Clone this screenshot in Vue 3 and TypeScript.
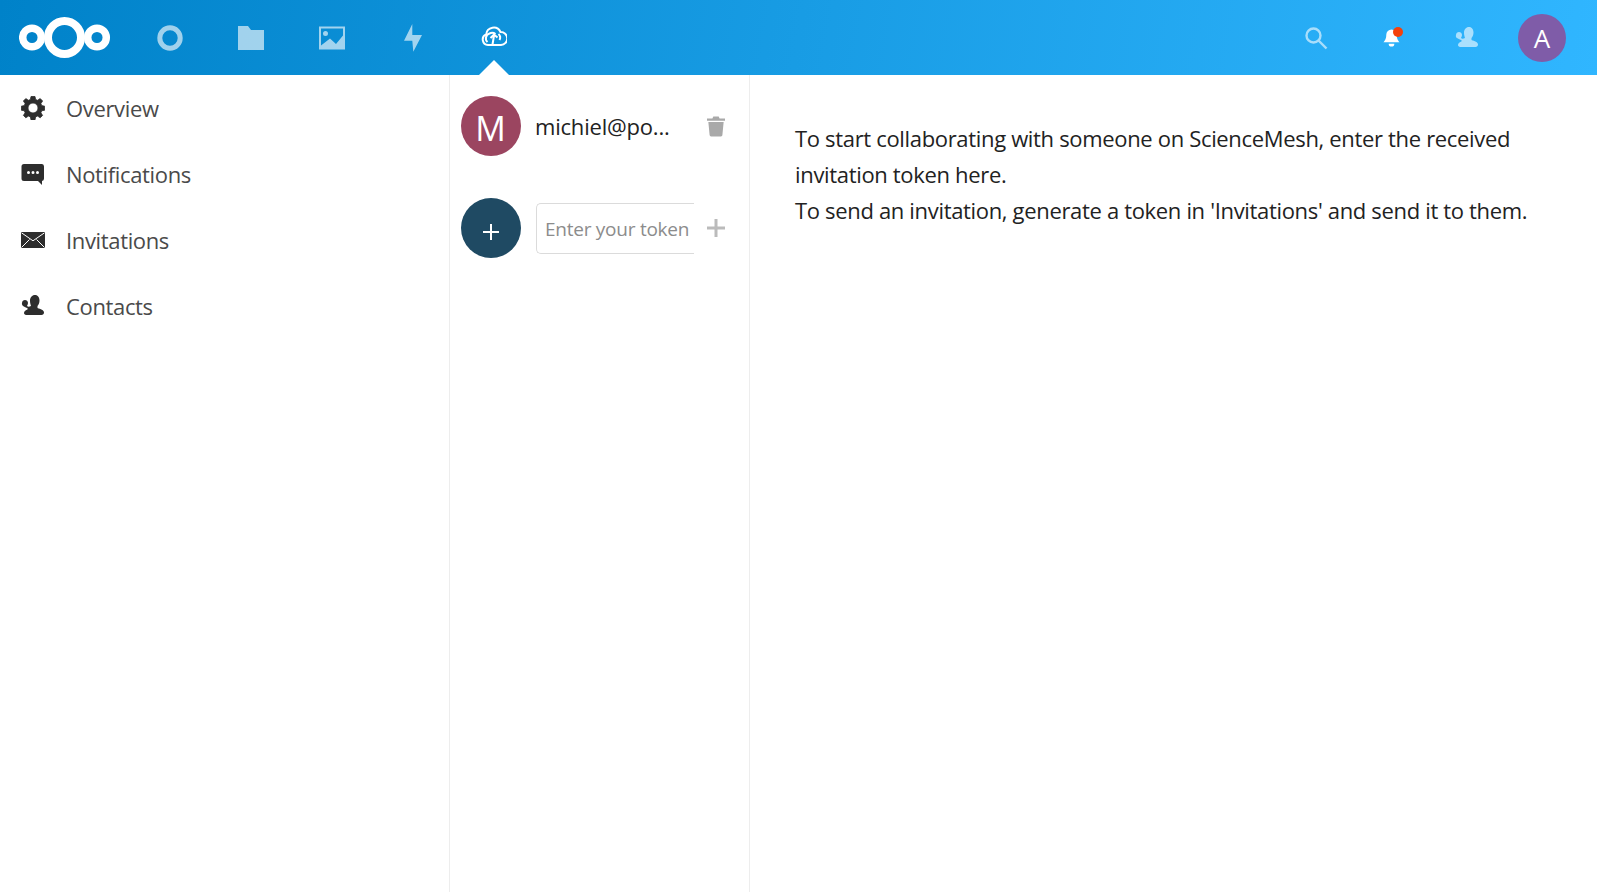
<script setup lang="ts">
const menu = [
  { label: 'Overview', icon: 'gear' },
  { label: 'Notifications', icon: 'chat' },
  { label: 'Invitations', icon: 'mail' },
  { label: 'Contacts', icon: 'people' },
]
</script>

<template>
  <div class="page">
    <header class="topbar">
      <div class="left">
        <svg class="logo" viewBox="0 0 92 41" width="92" height="41">
          <g fill="none" stroke="#fff">
            <circle cx="13" cy="20.500" r="9.300" stroke-width="7.500" />
            <circle cx="45.500" cy="20.500" r="16.500" stroke-width="8" />
            <circle cx="78" cy="20.500" r="9.300" stroke-width="7.500" />
          </g>
        </svg>
        <nav class="apps">
          <a class="app">
            <svg viewBox="0 0 26 26" width="26" height="26"><circle cx="13" cy="13" r="10.200" fill="none" stroke="#fff" stroke-width="5" /></svg>
          </a>
          <a class="app">
            <svg viewBox="0 0 26 26" width="26" height="26"><path fill="#fff" d="M0 1h10l3 4h13v20H0z" /></svg>
          </a>
          <a class="app">
            <svg viewBox="0 0 26 26" width="26" height="26"><path fill="#fff" fill-rule="evenodd" d="M0 1.500h26v23H0zM2 3.500v17L11 13.500l6 5.500 7-8.500V3.500zM6.500 6a2.500 2.500 0 1 1 0 5 2.500 2.500 0 0 1 0-5z" /></svg>
          </a>
          <a class="app">
            <svg viewBox="0 0 26 28" width="26" height="28"><path fill="#fff" d="M12.300 0v11H22l-8.700 16.700-1-11H4z" /></svg>
          </a>
          <a class="app active">
            <svg viewBox="0 0 26 26" width="26" height="26" fill="none" stroke="#fff" stroke-width="2"><path d="M7 23a5.500 5.500 0 0 1-1.800-10.600A7.500 7.500 0 0 1 19.500 10a6.500 6.500 0 0 1 .500 13z" /><path d="M11.500 22.500l1.500-9M9.500 16l3.500-3.500 3.500 3" /><path d="M6.500 20a5 5 0 0 1 2-8.500c2-1 4-1 6 .5M17.500 12a5 5 0 0 1 1 6" /></svg>
          </a>
        </nav>
      </div>
      <div class="right">
        <a class="tool">
          <svg viewBox="0 0 24 24" width="24" height="24" fill="none" stroke="#fff" stroke-width="2.400"><circle cx="9.500" cy="9.500" r="7" /><path d="M14.500 14.500l8 8" /></svg>
        </a>
        <a class="tool bell">
          <svg viewBox="0 0 20 20" width="19" height="20"><path fill="#fff" d="M10 1a5.500 5.500 0 0 0-5.500 5.500c0 4.500-1.500 6-3 8h17c-1.500-2-3-3.500-3-8A5.500 5.500 0 0 0 10 1zM7 16a3 3 0 0 0 6 0z" /></svg>
          <span class="dot"></span>
        </a>
        <a class="tool">
          <svg viewBox="0 0 24 24" width="24" height="24"><path fill="#fff" d="M15 1c3 0 4.500 2.500 4.500 5.500 0 2.500-1 4.500-2 5.500v2c3 1 6.500 2 6.500 4.500 0 1.500-1 2.500-2.500 2.500H7c-1.500 0-3-.5-3-2 0-2 2-3 3.500-3.500V14c-2-.5-2.500-1-3.500-1.500C2 12 1.500 10 2 9c0-2 1.500-3 3-3s3 1 3 3c0 1-.5 2-1 3 1 1 2 1 4 0-.5-2-1-3-1-5.500C10 3.500 12 1 15 1z" /></svg>
        </a>
        <div class="avatar me">A</div>
      </div>
    </header>

    <main class="content">
      <aside class="sidebar">
        <a v-for="item in menu" :key="item.label" class="menu-item">
          <span class="menu-icon">
            <svg v-if="item.icon === 'gear'" viewBox="0 0 24 24" width="24" height="24"><path fill="#2d2d2d" stroke="#2d2d2d" stroke-width="0.800" stroke-linejoin="round" fill-rule="evenodd" d="M10 .5h4l.6 3 2 .8 2.600-1.700 2.400 2.400-1.700 2.600.8 2 3 .6v4l-3 .6-.8 2 1.700 2.600-2.400 2.400-2.600-1.700-2 .8-.6 3h-4l-.6-3-2-.8-2.600 1.700-2.400-2.400 1.700-2.600-.8-2-3-.6v-4l3-.6.8-2-1.700-2.600 2.400-2.400 2.600 1.700 2-.8zM12 7a5 5 0 1 0 0 10 5 5 0 0 0 0-10z" /></svg>
            <svg v-else-if="item.icon === 'chat'" viewBox="0 0 24 24" width="24" height="24"><path fill="#2d2d2d" fill-rule="evenodd" d="M3 2h18a2.500 2.500 0 0 1 2 2.500v12a2.500 2.500 0 0 1-2 2.500v4l-4-4H3a2.500 2.500 0 0 1-2.500-2.500v-12A2.500 2.500 0 0 1 3 2zM7.500 9a1.500 1.500 0 1 0 0 3 1.500 1.500 0 0 0 0-3zm4.500 0a1.500 1.500 0 1 0 0 3 1.500 1.500 0 0 0 0-3zm4.500 0a1.500 1.500 0 1 0 0 3 1.500 1.500 0 0 0 0-3z" /></svg>
            <svg v-else-if="item.icon === 'mail'" viewBox="0 0 24 16" width="24" height="16"><path fill="#2d2d2d" d="M0 0h24v16H0z" /><path fill="none" stroke="#fff" d="M.5.800l11.500 8 11.500-8M.5 15.500l8-8M23.500 15.500l-8-8" /></svg>
            <svg v-else viewBox="0 0 24 24" width="24" height="24"><path fill="#2d2d2d" d="M14 1c3 0 4.500 2.500 4.500 5.500 0 2.500-1 4.500-2 5.500v2c3 1 6.500 2 6.500 4.500 0 1.500-1 2.500-2.500 2.500H6c-1.500 0-3-.5-3-2 0-2 2-3 3.500-3.500V14c-2-.5-2.500-1-3.500-1.500C1.500 12 .5 10 1 9c0-2 1.500-3 3-3s3 1 3 3c0 1-.5 2-1 3 1 1 2 1 4 0-.5-2-1-3-1-5.500C9 3.500 11 1 14 1z" /></svg>
          </span>
          <span class="menu-label">{{ item.label }}</span>
        </a>
      </aside>

      <section class="list">
        <div class="row">
          <div class="avatar contact">M</div>
          <span class="name">michiel@po...</span>
          <svg class="side-icon" viewBox="0 0 20 22" width="18" height="21"><path fill="#a9a9a9" d="M7 0h6l1 2h6v2.500H0V2h6zM1.500 6h17l-1.400 14.500c0 .8-.8 1.500-1.600 1.500H4.500c-.8 0-1.500-.7-1.600-1.500z" /></svg>
        </div>
        <div class="row add">
          <div class="avatar plus">
            <svg viewBox="0 0 18 18" width="18" height="18"><path stroke="#fff" stroke-width="2" d="M9 1v16M1 9h16" /></svg>
          </div>
          <input class="token" type="text" placeholder="Enter your token" />
          <svg class="side-icon" viewBox="0 0 18 18" width="18" height="18"><path stroke="#bbb" stroke-width="3" d="M9 0v18M0 9h18" /></svg>
        </div>
      </section>

      <section class="detail">
        <p>To start collaborating with someone on ScienceMesh, enter the received invitation token here.</p>
        <p>To send an invitation, generate a token in 'Invitations' and send it to them.</p>
      </section>
    </main>
  </div>
</template>

<style>
html,
body {
  margin: 0;
  height: 100%;
  overflow: hidden;
}
</style>

<style scoped>
.page {
  height: 892px;
  display: flex;
  flex-direction: column;
  font-family: 'Open Sans', 'Noto Sans', sans-serif;
  background: #fff;
}

.topbar {
  height: 75px;
  flex-shrink: 0;
  display: flex;
  justify-content: space-between;
  align-items: center;
  background: linear-gradient(100deg, #0082c9, #30b6ff);
}

.left,
.right,
.apps {
  display: flex;
  align-items: center;
}

.logo {
  margin-left: 19px;
}

.apps {
  margin-left: 18px;
}

.app {
  width: 81px;
  height: 75px;
  position: relative;
  display: flex;
  align-items: center;
  justify-content: center;
  opacity: 0.62;
}

.app.active {
  opacity: 1;
}

.app.active svg {
  margin-bottom: 6px;
}

.app.active::after {
  content: '';
  position: absolute;
  left: 50%;
  bottom: 0;
  margin-left: -15px;
  border: 15px solid transparent;
  border-top: 0;
  border-bottom-color: #fff;
}

.right {
  padding-right: 31px;
}

.tool {
  width: 75px;
  display: flex;
  justify-content: center;
  opacity: 0.6;
  position: relative;
}

.tool.bell {
  opacity: 1;
  left: 1px;
}

.dot {
  position: absolute;
  top: -1px;
  left: 39px;
  width: 10px;
  height: 10px;
  border-radius: 50%;
  background: #f4410c;
}

.avatar {
  border-radius: 50%;
  display: flex;
  align-items: center;
  justify-content: center;
  color: #fff;
  flex-shrink: 0;
}

.me {
  width: 48px;
  height: 48px;
  margin-left: 15px;
  background: #7f5ca8;
  font-size: 26px;
}

.content {
  flex: 1;
  display: flex;
  min-height: 0;
}

.sidebar {
  width: 450px;
  flex-shrink: 0;
  box-sizing: border-box;
  border-right: 1px solid #ededed;
}

.menu-item {
  height: 66px;
  display: flex;
  align-items: center;
  color: #4a4a4a;
  font-size: 22px;
  letter-spacing: -0.35px;
}

.menu-icon {
  width: 66px;
  display: flex;
  justify-content: center;
  flex-shrink: 0;
}

.list {
  width: 300px;
  flex-shrink: 0;
  box-sizing: border-box;
  border-right: 1px solid #ededed;
  padding: 21px 0 0 11px;
}

.row {
  display: flex;
  align-items: center;
  height: 60px;
}

.row.add {
  margin-top: 42px;
}

.contact {
  width: 60px;
  height: 60px;
  padding: 3px 1px 0 0;
  box-sizing: border-box;
  background: #9b4560;
  font-size: 34px;
}

.plus {
  width: 60px;
  height: 60px;
  background: #1f4a63;
}

.plus svg {
  margin-top: 8px;
}

.name {
  margin-left: 14px;
  width: 172px;
  color: #222;
  font-size: 22px;
  letter-spacing: -0.2px;
  white-space: nowrap;
}

.side-icon {
  flex-shrink: 0;
}

.token {
  margin-left: 15px;
  margin-right: 13px;
  width: 158px;
  height: 51px;
  box-sizing: border-box;
  border: 1px solid #dbdbdb;
  border-right: 0;
  border-radius: 5px 0 0 5px;
  padding: 2px 0 0 8px;
  font: inherit;
  font-size: 19px;
  letter-spacing: -0.25px;
  outline: none;
}

.token::placeholder {
  color: #8c8c8c;
}

.detail {
  flex: 1;
  padding: 45px 30px 0 45px;
  color: #222;
  font-size: 22px;
  letter-spacing: -0.33px;
  line-height: 36px;
}

.detail p {
  margin: 0;
}
</style>
